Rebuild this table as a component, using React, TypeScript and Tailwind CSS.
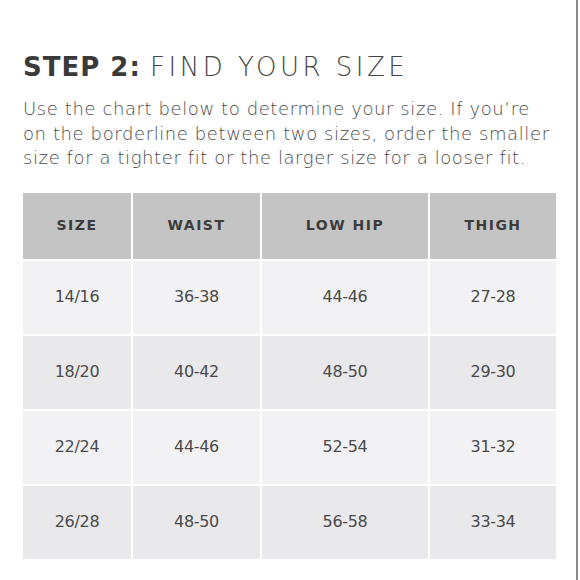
import React from "react";

const font = { fontFamily: '"DejaVu Sans", "Noto Sans", sans-serif' };

const rows = [
  ["14/16", "36-38", "44-46", "27-28"],
  ["18/20", "40-42", "48-50", "29-30"],
  ["22/24", "44-46", "52-54", "31-32"],
  ["26/28", "48-50", "56-58", "33-34"],
];

export default function App() {
  return (
    <div className="flex w-[580px] h-[580px] bg-white overflow-hidden" style={font}>
      <div className="w-[576px] shrink-0 flex flex-col pl-[23px] pt-[52px]">
        <h1 className="text-[26px] leading-[30px] text-[#3a3a3a] whitespace-nowrap tracking-[1px]">
          <span className="font-bold">STEP 2:</span>{" "}
          <span className="font-light tracking-[3.5px] text-[#444]">FIND YOUR SIZE</span>
        </h1>
        <p className="mt-[15px] text-[18px] leading-[24.5px] tracking-[0.6px] text-[#4a4a4a] whitespace-nowrap font-light">
          Use the chart below to determine your size. If you’re
          <br />
          on the borderline between two sizes, order the smaller
          <br />
          size for a tighter fit or the larger size for a looser fit.
        </p>
        <div className="mt-[22px] grid grid-cols-[108px_127px_166px_126px] gap-[2px] w-[533px]">
          {["SIZE", "WAIST", "LOW HIP", "THIGH"].map((h) => (
            <div
              key={h}
              className="h-[66px] bg-[#c4c4c4] flex items-center justify-center text-[14px] font-semibold tracking-[1.5px] text-[#3c3c3c]"
            >
              {h}
            </div>
          ))}
          {rows.map((r, i) =>
            r.map((c, j) => (
              <div
                key={i + "-" + j}
                className={
                  "h-[73px] flex items-center justify-center text-[16px] tracking-[-0.3px] text-[#4a4a4a] " +
                  (i % 2 === 0 ? "bg-[#f2f2f4]" : "bg-[#e9e9eb]")
                }
              >
                {c}
              </div>
            ))
          )}
        </div>
      </div>
      <div className="w-[2px] h-full bg-[#8a8a8a] shrink-0" />
    </div>
  );
}
